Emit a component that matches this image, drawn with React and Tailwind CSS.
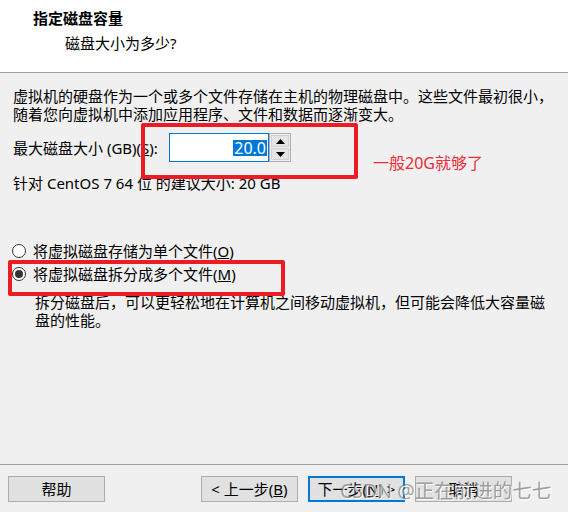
export default function App() {
  return (
    <div className="relative w-[568px] h-[512px] overflow-hidden bg-[#f0f0f0] text-black flex flex-col font-['Noto_Sans','Noto_Sans_CJK_SC',sans-serif]">
      {/* header */}
      <div className="h-[73px] shrink-0 bg-white border-b border-[#a0a0a0] pl-[33px] pt-[8px]">
        <div className="text-[15px] font-bold leading-[20px] font-['Noto_Sans_CJK_SC',sans-serif]">指定磁盘容量</div>
        <div className="text-[15px] leading-[20px] pl-[32px] mt-[5px]">磁盘大小为多少?</div>
      </div>

      {/* body */}
      <div className="flex-1 px-[13px] pt-[14px] text-[15px] leading-[18px]">
        <p className="whitespace-nowrap">
          虚拟机的硬盘作为一个或多个文件存储在主机的物理磁盘中。这些文件最初很小，
          <br />
          随着您向虚拟机中添加应用程序、文件和数据而逐渐变大。
        </p>

        <div className="flex items-center mt-[10px] h-[29px]">
          <span className="w-[150px] whitespace-nowrap">
            最大磁盘大小 (GB)(<span className="underline">S</span>):
          </span>
          <div className="ml-[6px] flex h-[29px]">
            <div className="w-[100px] h-full border border-[#0078d7] bg-white flex items-center justify-end pr-[1px]">
              <span className="bg-[#0078d7] text-white text-[16px] leading-[16px] px-[1px]">20.0</span>
            </div>
            <div className="w-[22px] h-full border border-[#adadad] bg-[#f0f0f0] flex flex-col p-[1px] gap-[1px]">
              <div className="flex-1 border border-[#d0d0d0] bg-[#e5e5e5] flex items-center justify-center">
                <svg width="9" height="5" viewBox="0 0 9 5"><polygon points="4.5,0 9,5 0,5" fill="#000" /></svg>
              </div>
              <div className="flex-1 border border-[#d0d0d0] bg-[#e5e5e5] flex items-center justify-center">
                <svg width="9" height="5" viewBox="0 0 9 5"><polygon points="0,0 9,0 4.5,5" fill="#000" /></svg>
              </div>
            </div>
          </div>
        </div>

        <div className="mt-[12px]">针对 CentOS 7 64 位 的建议大小: 20 GB</div>

        <div className="mt-[47px] flex items-center h-[23px] ml-[-1px]">
          <span className="w-[14px] h-[14px] rounded-full border border-[#333] bg-white shrink-0" />
          <span className="ml-[7px]">
            将虚拟磁盘存储为单个文件(<span className="underline">O</span>)
          </span>
        </div>
        <div className="flex items-center h-[23px] ml-[-1px]">
          <span className="w-[14px] h-[14px] rounded-full border border-[#333] bg-white shrink-0 flex items-center justify-center">
            <span className="w-[8px] h-[8px] rounded-full bg-[#333]" />
          </span>
          <span className="ml-[7px]">
            将虚拟磁盘拆分成多个文件(<span className="underline">M</span>)
          </span>
        </div>

        <p className="mt-[8px] pl-[22px]">
          拆分磁盘后，可以更轻松地在计算机之间移动虚拟机，但可能会降低大容量磁
          <br />
          盘的性能。
        </p>
      </div>

      {/* footer */}
      <div className="h-[48px] shrink-0 border-t border-[#a0a0a0] pt-[11px] pl-[8px] pr-[56px] flex items-start justify-between text-[15px]">
        <button className="w-[97px] h-[26px] bg-[#e1e1e1] border border-[#adadad] leading-none">帮助</button>
        <div className="flex gap-[10px]">
          <button className="w-[97px] h-[26px] bg-[#e1e1e1] border border-[#adadad] leading-none">
            &lt; 上一步(<span className="underline">B</span>)
          </button>
          <button className="w-[97px] h-[26px] bg-[#e1e1e1] border-2 border-[#0078d7] leading-none">
            下一步(<span className="underline">N</span>) &gt;
          </button>
          <button className="w-[97px] h-[26px] bg-[#e1e1e1] border border-[#adadad] leading-none">取消</button>
        </div>
      </div>

      {/* annotations */}
      <div className="absolute left-[141px] top-[123px] w-[217px] h-[56px] border-[4px] border-[#ed1c24] rounded-[2px]" />
      <div className="absolute left-[373px] top-[154px] text-[16px] leading-[18px] text-[#ee2a36]">一般20G就够了</div>
      <div className="absolute left-[8px] top-[260px] w-[277px] h-[36px] border-[4px] border-[#ed1c24] rounded-[2px]" />

      {/* watermark */}
      <div className="absolute left-[340px] top-[479px] text-[19.5px] leading-[24px] whitespace-nowrap text-[rgba(110,110,110,0.65)] [text-shadow:1px_1px_0_rgba(255,255,255,0.9)]">
        CSDN @正在前进的七七
      </div>
    </div>
  );
}
